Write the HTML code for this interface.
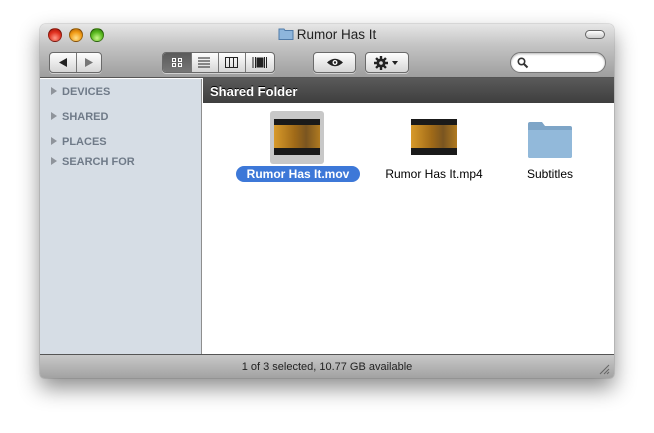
<!DOCTYPE html>
<html><head><meta charset="utf-8"><style>
*{margin:0;padding:0;box-sizing:border-box}
body{width:654px;height:433px;background:#fff;font-family:"Liberation Sans",sans-serif;position:relative;overflow:hidden}
.win{position:absolute;left:40px;top:24px;width:574px;height:354px;border-radius:5px 5px 4px 4px;box-shadow:0 10px 22px rgba(0,0,0,.45),0 0 1px rgba(0,0,0,.6);overflow:hidden;background:#fff}
.top{position:absolute;left:0;top:0;width:574px;height:54px;background:linear-gradient(#e6e6e6,#c4c4c4 40%,#9e9e9e);border-bottom:1px solid #555}
.light{position:absolute;top:4px;width:14px;height:14px;border-radius:50%;border:1px solid rgba(0,0,0,.35)}
.title{position:absolute;top:3px;left:0;width:100%;text-align:center;font-size:13.5px;color:#222}
.btn{position:absolute;top:28px;height:21px;border:1px solid #6a6a6a;border-radius:4px;background:linear-gradient(#fdfdfd,#d6d6d6);box-shadow:0 1px 0 rgba(255,255,255,.5)}
.seg{position:absolute;top:0;height:19px;border-left:1px solid #777}
.side{position:absolute;left:0;top:55px;width:162px;height:275px;background:#d6dde5;border-right:1px solid #8e8e8e}
.side div{position:absolute;left:11px;font-size:11px;font-weight:bold;color:#6f7a88}
.side div:before{content:"";display:inline-block;border-left:6px solid #8f949b;border-top:4px solid transparent;border-bottom:4px solid transparent;margin-right:5px;vertical-align:0}
.hdr{position:absolute;left:163px;top:54px;width:411px;height:25px;background:linear-gradient(#5a5a5a,#3e3e3e);color:#fff;font-size:13px;font-weight:bold;padding:6px 0 0 7px;text-shadow:0 -1px 0 #000}
.status{position:absolute;left:0;top:330px;width:574px;height:24px;background:linear-gradient(#c8c8c8,#a2a2a2);border-top:1px solid #555;text-align:center;font-size:11px;color:#222;padding-top:6px}
.lbl{position:absolute;font-size:12px;color:#000;text-align:center}
</style></head><body>
<div class="win">
 <div class="top">
  <div class="light" style="left:8px;background:radial-gradient(circle at 50% 75%,#ff9a88,#e0301e 55%,#9a1208)"></div>
  <div class="light" style="left:29px;background:radial-gradient(circle at 50% 75%,#ffe08a,#f09a14 55%,#a85a04)"></div>
  <div class="light" style="left:50px;background:radial-gradient(circle at 50% 75%,#c8f88a,#58b81e 55%,#2a700a)"></div>
  <div class="title"><svg width="16" height="13" viewBox="0 0 16 13" style="vertical-align:-1px;margin-right:3px"><path d="M1 2h5l1 1.5h8v9H1z" fill="#8db5dc" stroke="#4f7aa8"/></svg>Rumor Has It</div>
  <div style="position:absolute;right:9px;top:6px;width:20px;height:9px;border:1px solid #666;border-radius:5px;background:linear-gradient(#fff,#ccc)"></div>
  <div class="btn" style="left:9px;width:53px">
   <svg style="position:absolute;left:9px;top:5px" width="9" height="9"><path d="M8 0v9L0 4.5z" fill="#222"/></svg>
   <div class="seg" style="left:26px"></div>
   <svg style="position:absolute;left:35px;top:5px" width="9" height="9"><path d="M0 0v9l8-4.5z" fill="#777"/></svg>
  </div>
  <div class="btn" style="left:122px;width:113px;overflow:hidden">
   <div style="position:absolute;left:0;top:0;width:28px;height:19px;background:linear-gradient(#5a5a5a,#777)"></div>
   <svg style="position:absolute;left:9px;top:5px" width="10" height="9"><g fill="none" stroke="#fff"><rect x=".5" y=".5" width="3" height="3"/><rect x="6.5" y=".5" width="3" height="3"/><rect x=".5" y="5.5" width="3" height="3"/><rect x="6.5" y="5.5" width="3" height="3"/></g></svg>
   <div class="seg" style="left:28px"></div>
   <svg style="position:absolute;left:35px;top:4px" width="12" height="11"><path d="M0 1h12M0 4h12M0 7h12M0 10h12" stroke="#222"/></svg>
   <div class="seg" style="left:55px"></div>
   <svg style="position:absolute;left:62px;top:4px" width="13" height="11"><path d="M.5 .5h12v10H.5zM4.5 .5v10M8.5 .5v10" stroke="#222" fill="none"/></svg>
   <div class="seg" style="left:82px"></div>
   <svg style="position:absolute;left:89px;top:4px" width="15" height="11"><path d="M1 0v11M3.5 0v11M5 1h6v9H5zM12.5 0v11M14.5 0v11" stroke="#222" fill="#222"/></svg>
  </div>
  <div class="btn" style="left:273px;width:43px"><svg style="position:absolute;left:12px;top:4px" width="18" height="11"><path d="M1 5.5Q9-2 17 5.5Q9 13 1 5.5z" fill="#222"/><circle cx="9" cy="5.5" r="2.5" fill="#fff"/><circle cx="9" cy="5.5" r="1.2" fill="#222"/></svg></div>
  <div class="btn" style="left:325px;width:44px"><svg style="position:absolute;left:8px;top:3px" width="28" height="14"><g transform="translate(7,7)" fill="#222"><circle r="4.5"/><path d="M-1.2-7h2.4v14h-2.4zM-7-1.2h14v2.4h-14z"/><path d="M-1.2-7h2.4v14h-2.4zM-7-1.2h14v2.4h-14z" transform="rotate(45)"/></g><circle cx="7" cy="7" r="1.8" fill="#ddd"/><path d="M18 5h6l-3 4z" fill="#222"/></svg></div>
  <div style="position:absolute;left:470px;top:28px;width:96px;height:21px;border-radius:11px;background:#fff;border:1px solid #777;box-shadow:inset 0 1px 2px rgba(0,0,0,.3)"><svg style="position:absolute;left:6px;top:4px" width="12" height="12"><circle cx="4.5" cy="4.5" r="3.2" fill="none" stroke="#333" stroke-width="1.6"/><path d="M7 7l3.5 3.5" stroke="#333" stroke-width="2"/></svg></div>
 </div>
 <div class="side">
  <div style="top:7px">DEVICES</div>
  <div style="top:32px">SHARED</div>
  <div style="top:57px">PLACES</div>
  <div style="top:77px">SEARCH FOR</div>
 </div>
 <div class="hdr">Shared Folder</div>
 <div style="position:absolute;left:230px;top:87px;width:54px;height:53px;background:#c8c8c8;border-radius:3px"></div>
 <defs></defs>
 <svg style="position:absolute;left:234px;top:95px" width="46" height="36"><defs><linearGradient id="g" x1="0" x2="1"><stop offset="0" stop-color="#d89a2a"/><stop offset=".45" stop-color="#a06a18"/><stop offset=".7" stop-color="#7a5520"/><stop offset="1" stop-color="#b07a20"/></linearGradient></defs><rect width="46" height="36" fill="#1a1a1a"/><path d="M0 6h46v23H0z" fill="url(#g)"/></svg>
 <svg style="position:absolute;left:371px;top:95px" width="46" height="36"><rect width="46" height="36" fill="#1a1a1a"/><path d="M0 6h46v23H0z" fill="url(#g)"/></svg>
 <svg style="position:absolute;left:486px;top:96px" width="48" height="40"><path d="M2 4q0-2 2-2h12l3 4h25q2 0 2 2v28q0 2-2 2H4q-2 0-2-2z" fill="#7ea5c7"/><path d="M2 10h44v26q0 2-2 2H4q-2 0-2-2z" fill="#92b9da"/></svg>
 <div style="position:absolute;left:196px;top:142px;width:124px;height:16px;border-radius:8px;background:#3d78d8"></div>
 <div class="lbl" style="left:196px;top:143px;width:124px;color:#fff;font-weight:bold">Rumor Has It.mov</div>
 <div class="lbl" style="left:334px;top:143px;width:120px">Rumor Has It.mp4</div>
 <div class="lbl" style="left:470px;top:143px;width:80px">Subtitles</div>
 <div class="status">1 of 3 selected, 10.77 GB available
  <svg style="position:absolute;right:4px;bottom:3px" width="11" height="11"><path d="M10 1L1 10M10 5L5 10M10 8L8 10" stroke="#666"/></svg></div>
</div>
</body></html>
